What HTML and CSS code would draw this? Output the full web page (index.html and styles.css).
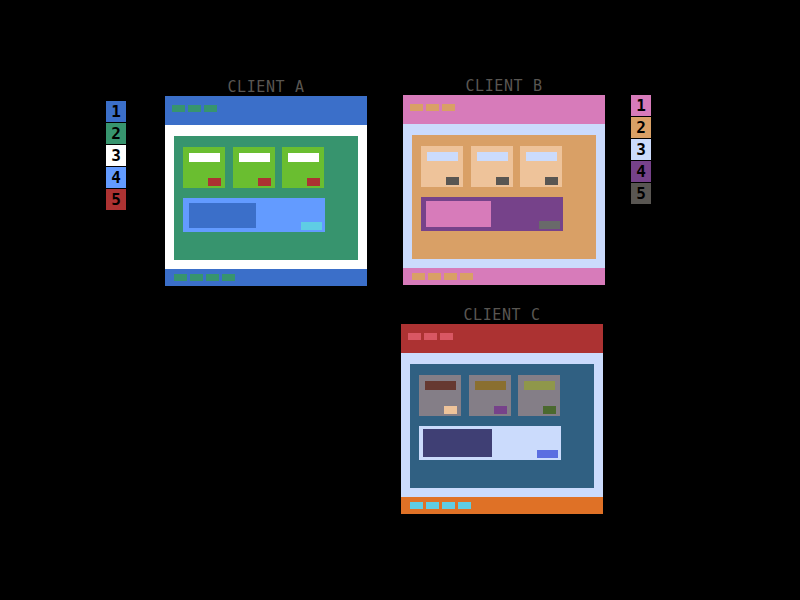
FILE: index.html
```html
<!DOCTYPE html>
<html lang="en">
<head>
  <meta charset="UTF-8" />
  <title>Clients</title>
  <link rel="stylesheet" href="styles.css">
</head>
<body>

  <!-- Palette for client A -->
  <div class="palette palette-a">
    <div class="swatch">1</div>
    <div class="swatch">2</div>
    <div class="swatch">3</div>
    <div class="swatch">4</div>
    <div class="swatch">5</div>
  </div>

  <!-- Client A -->
  <div class="client client-a">
    <div class="client-title">CLIENT A</div>
    <div class="window">
      <div class="win-head"><span class="pill"></span><span class="pill"></span><span class="pill"></span></div>
      <div class="win-body">
        <div class="inner">
          <div class="cards">
            <div class="card"><div class="card-bar"></div><div class="card-btn"></div></div>
            <div class="card"><div class="card-bar"></div><div class="card-btn"></div></div>
            <div class="card"><div class="card-bar"></div><div class="card-btn"></div></div>
          </div>
          <div class="panel"><div class="panel-block"></div><div class="panel-btn"></div></div>
        </div>
      </div>
      <div class="win-foot"><span class="pill"></span><span class="pill"></span><span class="pill"></span><span class="pill"></span></div>
    </div>
  </div>

  <!-- Client B -->
  <div class="client client-b">
    <div class="client-title">CLIENT B</div>
    <div class="window">
      <div class="win-head"><span class="pill"></span><span class="pill"></span><span class="pill"></span></div>
      <div class="win-body">
        <div class="inner">
          <div class="cards">
            <div class="card"><div class="card-bar"></div><div class="card-btn"></div></div>
            <div class="card"><div class="card-bar"></div><div class="card-btn"></div></div>
            <div class="card"><div class="card-bar"></div><div class="card-btn"></div></div>
          </div>
          <div class="panel"><div class="panel-block"></div><div class="panel-btn"></div></div>
        </div>
      </div>
      <div class="win-foot"><span class="pill"></span><span class="pill"></span><span class="pill"></span><span class="pill"></span></div>
    </div>
  </div>

  <!-- Palette for client B -->
  <div class="palette palette-b">
    <div class="swatch">1</div>
    <div class="swatch">2</div>
    <div class="swatch">3</div>
    <div class="swatch">4</div>
    <div class="swatch">5</div>
  </div>

  <!-- Client C -->
  <div class="client client-c">
    <div class="client-title">CLIENT C</div>
    <div class="window">
      <div class="win-head"><span class="pill"></span><span class="pill"></span><span class="pill"></span></div>
      <div class="win-body">
        <div class="inner">
          <div class="cards">
            <div class="card card-1"><div class="card-bar"></div><div class="card-btn"></div></div>
            <div class="card card-2"><div class="card-bar"></div><div class="card-btn"></div></div>
            <div class="card card-3"><div class="card-bar"></div><div class="card-btn"></div></div>
          </div>
          <div class="panel"><div class="panel-block"></div><div class="panel-btn"></div></div>
        </div>
      </div>
      <div class="win-foot"><span class="pill"></span><span class="pill"></span><span class="pill"></span><span class="pill"></span></div>
    </div>
  </div>

</body>
</html>
```

FILE: styles.css
```css
body {
  margin: 0;
  width: 800px;
  height: 600px;
  background-color: #000;
  position: relative;
  overflow: hidden;
  font-family: 'DejaVu Sans Mono', monospace;
}

/* palettes */
.palette {
  position: absolute;
  display: flex;
  flex-direction: column;
  gap: 1px;
}

.palette-a { left: 106px; top: 101px; }
.palette-b { left: 631px; top: 95px; }

.swatch {
  width: 20px;
  height: 21px;
  line-height: 21px;
  text-align: center;
  font-size: 16px;
  font-weight: bold;
  color: #000;
}

.palette-a .swatch:nth-child(1) { background-color: #3b6fc9; }
.palette-a .swatch:nth-child(2) { background-color: #37946e; }
.palette-a .swatch:nth-child(3) { background-color: #ffffff; }
.palette-a .swatch:nth-child(4) { background-color: #639bff; }
.palette-a .swatch:nth-child(5) { background-color: #ac3232; }

.palette-b .swatch:nth-child(1) { background-color: #d77bba; }
.palette-b .swatch:nth-child(2) { background-color: #d9a066; }
.palette-b .swatch:nth-child(3) { background-color: #cbdbfc; }
.palette-b .swatch:nth-child(4) { background-color: #76428a; }
.palette-b .swatch:nth-child(5) { background-color: #595652; }

/* client windows on the canvas */
.client {
  position: absolute;
  width: 202px;
  display: flex;
  flex-direction: column;
  align-items: center;
}

.client-a { left: 165px; top: 81px; }
.client-b { left: 403px; top: 80px; }
.client-c { left: 401px; top: 309px; }

.client-title {
  height: 12px;
  line-height: 12px;
  margin-bottom: 3px;
  font-size: 15px;
  letter-spacing: 0.6px;
  color: #595652;
}

.window {
  width: 202px;
}

.win-head {
  height: 29px;
  box-sizing: border-box;
  padding: 9px 7px;
  display: flex;
  align-items: flex-start;
  gap: 3px;
  background-color: var(--head);
}

.win-head .pill {
  background-color: var(--pill);
}

.pill {
  width: 13px;
  height: 7px;
}

.win-body {
  height: 144px;
  box-sizing: border-box;
  padding: 11px 9px 9px;
  background-color: var(--body);
}

.inner {
  height: 124px;
  box-sizing: border-box;
  padding: 11px 9px;
  background-color: var(--inner);
}

.cards {
  display: flex;
  gap: 7.5px;
}

.card {
  width: 42px;
  height: 41px;
  box-sizing: border-box;
  padding: 6px 4px 2px 6px;
  display: flex;
  flex-direction: column;
  justify-content: space-between;
  background-color: var(--card);
}

.card-bar {
  width: 31px;
  height: 9px;
  background-color: var(--bar);
}

.card-btn {
  width: 13px;
  height: 8px;
  align-self: flex-end;
  background-color: var(--btn);
}

.panel {
  width: 142px;
  height: 34px;
  margin-top: 10px;
  box-sizing: border-box;
  padding: var(--by) 3px 2px var(--bx);
  display: flex;
  background-color: var(--panel);
}

.panel-block {
  width: var(--bw);
  height: var(--bh);
  background-color: var(--block);
}

.panel-btn {
  width: 21px;
  height: 8px;
  margin-left: auto;
  align-self: flex-end;
  background-color: var(--pbtn);
}

.win-foot {
  height: 17px;
  box-sizing: border-box;
  padding: 5px 9px;
  display: flex;
  align-items: flex-start;
  gap: 3px;
  background-color: var(--foot);
}

.win-foot .pill {
  background-color: var(--fpill);
}

/* colour sets */
.client-a {
  --head: #3b6fc9;
  --pill: #37946e;
  --body: #ffffff;
  --inner: #37946e;
  --card: #6abe30;
  --bar: #ffffff;
  --btn: #ac3232;
  --panel: #639bff;
  --block: #3b6fc9;
  --pbtn: #5fcde4;
  --foot: #3b6fc9;
  --fpill: #37946e;
  --bx: 6px; --by: 5px; --bw: 67px; --bh: 25px;
}

.client-b {
  --head: #d77bba;
  --pill: #d9a066;
  --body: #cbdbfc;
  --inner: #d9a066;
  --card: #eec39a;
  --bar: #cbdbfc;
  --btn: #595652;
  --panel: #76428a;
  --block: #d77bba;
  --pbtn: #696a6a;
  --foot: #d77bba;
  --fpill: #d9a066;
  --bx: 5px; --by: 4px; --bw: 65px; --bh: 26px;
}

.client-c {
  --head: #ac3232;
  --pill: #d95763;
  --body: #cbdbfc;
  --inner: #306082;
  --card: #847e87;
  --panel: #cbdbfc;
  --block: #3f3f74;
  --pbtn: #5b6ee1;
  --foot: #df7126;
  --fpill: #5fcde4;
  --bx: 4px; --by: 3px; --bw: 69px; --bh: 28px;
}

.client-c .card-1 { --bar: #663931; --btn: #eec39a; }
.client-c .card-2 { --bar: #8a6f30; --btn: #76428a; }
.client-c .card-3 { --bar: #8f974a; --btn: #4b692f; }
```
